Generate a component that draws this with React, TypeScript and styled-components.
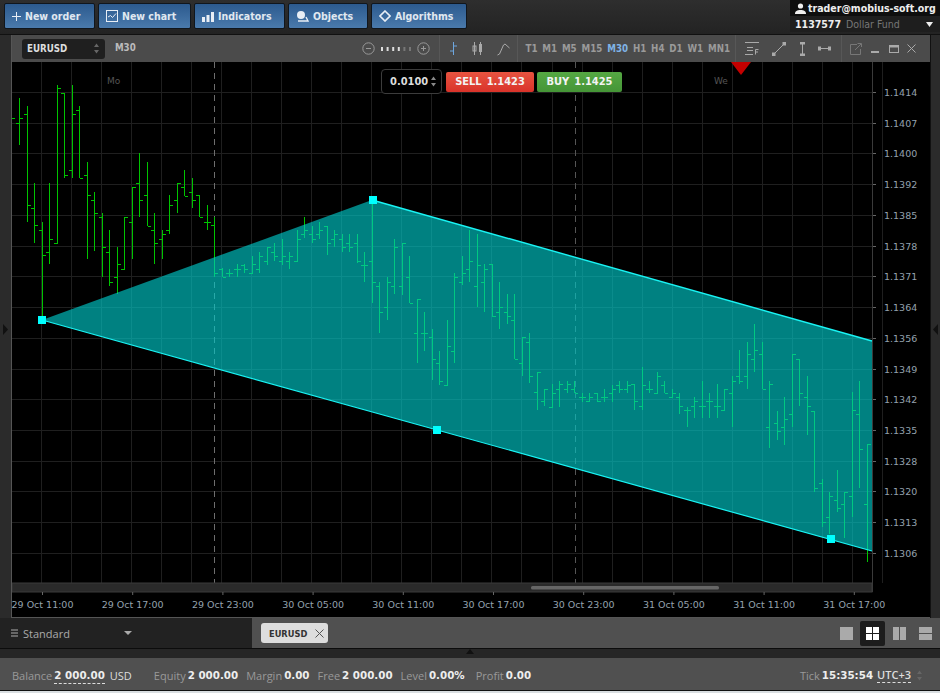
import React from 'react';
import styled, { createGlobalStyle } from 'styled-components';

const Global = createGlobalStyle`
  html, body { margin: 0; padding: 0; background: #1d1d1d; }
  body { width: 940px; height: 693px; overflow: hidden; font-family: "Open Sans", "DejaVu Sans", sans-serif; }
  * { box-sizing: border-box; }
`;

const Page = styled.div`
  width: 940px;
  height: 693px;
  display: flex;
  flex-direction: column;
  background: #222;
`;

const TopBar = styled.div`
  height: 35px;
  flex: none;
  display: flex;
  justify-content: space-between;
  padding-left: 4px;
  background: linear-gradient(#2e2e2e, #232323);
  border-bottom: 1px solid #111;
`;

const Buttons = styled.div`
  display: flex;
  gap: 3px;
  padding-top: 3px;
`;

const TopButton = styled.div<{ $w: number }>`
  width: ${p => p.$w}px;
  height: 26px;
  display: flex;
  align-items: center;
  gap: 4px;
  padding-left: 7px;
  color: #e0e8f0;
  font: 700 condensed 10.5px "DejaVu Sans", sans-serif;
  white-space: nowrap;
  border: 1px solid #10161d;
  border-radius: 2px;
  background: linear-gradient(#2c5a8e, #4a7aac);
`;

const Account = styled.div`
  width: 150px;
  height: 32px;
  background: #0e0e0e;
  color: #eee;
  font: 700 condensed 10.5px "DejaVu Sans", sans-serif;
  white-space: nowrap;
`;

const AccountTop = styled.div`
  height: 16px;
  display: flex;
  align-items: center;
  gap: 2px;
  padding-left: 5px;
`;

const AccountBottom = styled.div`
  height: 16px;
  display: flex;
  align-items: center;
  gap: 5px;
  padding: 0 7px 0 5px;
  background: #1e1e1e;
`;

const FundName = styled.span`
  color: #777;
  font-weight: 400;
  flex: 1;
`;

const Middle = styled.div`
  flex: 1;
  display: flex;
  min-height: 0;
`;

const SideRail = styled.div<{ $w: number; $side: 'left' | 'right' }>`
  width: ${p => p.$w}px;
  flex: none;
  background: #2b2b2b;
  display: flex;
  align-items: center;
  justify-content: center;
  padding-top: 5px;
  ${p => (p.$side === 'left' ? 'border-right: 1px solid #555;' : 'border-left: 1px solid #111;')}
`;

const ChartWindow = styled.div`
  flex: 1;
  display: flex;
  flex-direction: column;
  min-width: 0;
`;

const ChartBar = styled.div`
  height: 27px;
  flex: none;
  display: flex;
  align-items: center;
  background: #4b4b4b;
  color: #bbb;
  font: 700 condensed 9.7px "DejaVu Sans", sans-serif;
  white-space: nowrap;
`;

const SymbolBox = styled.div`
  width: 83px;
  height: 20px;
  margin-left: 10px;
  padding: 0 5px;
  display: flex;
  align-items: center;
  justify-content: space-between;
  border-radius: 3px;
  background: #1f1f1f;
  color: #ddd;
`;

const Interval = styled.span`
  margin: 0 0 2px 10px;
  width: 247px;
`;

const Zoomer = styled.div`
  display: flex;
  align-items: center;
  justify-content: space-between;
  width: 68px;
  margin-right: 9px;
`;

const ToolSection = styled.div<{ $w: number; $pad?: string }>`
  width: ${p => p.$w}px;
  height: 100%;
  display: flex;
  align-items: center;
  justify-content: space-between;
  padding: ${p => p.$pad ?? '0 8px'};
  border-left: 1px solid #575757;
`;

const Period = styled.span<{ $on?: boolean }>`
  color: ${p => (p.$on ? '#7fb3e6' : '#9a9a9a')};
`;

const Chart = styled.div`
  position: relative;
  flex: 1;
  min-height: 0;
  background: #000;
`;

const ChartSvg = styled.svg`
  display: block;
  width: 100%;
  height: 100%;
`;

const OrderPanel = styled.div`
  position: absolute;
  left: 369px;
  top: 7px;
  display: flex;
  align-items: center;
  gap: 3px;
`;

const Lot = styled.div`
  width: 61px;
  height: 25px;
  margin-right: 1px;
  display: flex;
  align-items: center;
  justify-content: space-between;
  padding: 0 4px 0 8px;
  background: #000;
  border: 1px solid #3c3c3c;
  border-radius: 4px;
  color: #ddd;
  font: 700 condensed 11px "DejaVu Sans", sans-serif;
`;

const Trade = styled.div<{ $w: number; $from: string; $to: string }>`
  width: ${p => p.$w}px;
  height: 20px;
  display: flex;
  align-items: center;
  justify-content: center;
  gap: 5px;
  border-radius: 2px;
  color: #f3f3f3;
  font: 700 condensed 11px "DejaVu Sans", sans-serif;
  background: linear-gradient(${p => p.$from}, ${p => p.$to});
`;

const TabsRow = styled.div`
  height: 31px;
  flex: none;
  display: flex;
  border-bottom: 1px solid #0c0c0c;
`;

const LayoutSelect = styled.div`
  width: 252px;
  display: flex;
  align-items: center;
  gap: 5px;
  padding-left: 11px;
  background: #222;
  color: #aaa;
  font-size: 11px;
`;

const SelectLabel = styled.span`
  width: 96px;
`;

const TabStrip = styled.div`
  flex: 1;
  display: flex;
  align-items: center;
  justify-content: space-between;
  padding: 0 2px 0 9px;
  background: #505050;
`;

const Tab = styled.div`
  width: 67px;
  height: 20px;
  display: flex;
  align-items: center;
  gap: 8px;
  padding-left: 8px;
  border-radius: 3px;
  background: #ddd;
  color: #333;
  font: 700 condensed 9.2px "DejaVu Sans", sans-serif;
`;

const Layouts = styled.div`
  display: flex;
  gap: 1.5px;
`;

const LayoutBtn = styled.div<{ $on?: boolean }>`
  width: 25px;
  height: 25px;
  display: flex;
  align-items: center;
  justify-content: center;
  border-radius: 2px;
  background: ${p => (p.$on ? '#1c1c1c' : 'transparent')};
`;

const Splitter = styled.div`
  height: 9px;
  flex: none;
  display: flex;
  justify-content: center;
  background: #262626;
`;

const StatusBar = styled.div`
  height: 33px;
  flex: none;
  display: flex;
  align-items: center;
  padding: 3px 17px 0 12px;
  background: #505050;
  border-bottom: 1px solid #111;
  color: #999;
  font-size: 11px;
`;

const Stat = styled.span<{ $gap?: number }>`
  display: inline-flex;
  gap: 2px;
  margin-right: ${p => p.$gap ?? 8}px;
`;

const Val = styled.b<{ $dash?: boolean }>`
  font: 700 10.3px "DejaVu Sans", sans-serif;
  line-height: 15px;
  color: #eee;
  ${p => p.$dash && 'border-bottom: 1px dashed #ddd;'}
`;

const Unit = styled.span`
  color: #ddd;
  margin-left: 3px;
`;

const Spacer = styled.div`
  flex: 1;
`;

const Utc = styled.span`
  color: #ddd;
  font-weight: 600;
  line-height: 14px;
  border-bottom: 1px dashed #ddd;
  margin: 0 5px 0 4px;
`;

const BottomEdge = styled.div`
  height: 2px;
  flex: none;
  background: #d9dee1;
`;

const priceLabels = ['1.1414', '1.1407', '1.1400', '1.1392', '1.1385', '1.1378', '1.1371', '1.1364', '1.1356', '1.1349', '1.1342', '1.1335', '1.1328', '1.1320', '1.1313', '1.1306'];
const timeLabels = ['29 Oct 11:00', '29 Oct 17:00', '29 Oct 23:00', '30 Oct 05:00', '30 Oct 11:00', '30 Oct 17:00', '30 Oct 23:00', '31 Oct 05:00', '31 Oct 11:00', '31 Oct 17:00'];

// high, low, open, close in page pixels; one bar every 7.5px starting at x = 19.2
const bars: number[][] = [
  [98,145,123,118],[106,222,114,205],[183,243,208,225],[222,320,230,255],[183,264,252,239],
  [85,243,243,88],[93,178,93,175],[85,178,170,114],[106,178,110,178],[162,259,175,195],
  [192,251,200,213],[213,277,217,247],[230,286,252,282],[247,294,277,264],[217,269,269,217],
  [187,259,222,187],[153,217,183,200],[162,226,195,226],[213,264,230,243],[230,259,239,234],
  [195,234,230,205],[183,213,200,183],[170,196,187,196],[178,208,192,200],[195,217,195,217],
  [205,230,222,222],[217,277,225,273],
  [268,277,269,277],[269,277,273,273],[264,277,269,269],[264,273,265,269],[256,273,273,264],
  [252,273,269,256],[247,265,261,247],[243,261,252,256],[239,265,261,256],[252,269,261,256],
  [230,261,261,239],[217,238,234,230],[226,243,234,239],[222,239,234,230],[226,255,226,243],
  [230,247,239,234],[234,252,239,247],[234,252,243,247],[234,263,243,261],[252,282,265,265],
  [202,303,261,282],[282,333,286,312],[277,320,307,282],[239,294,286,247],[243,295,286,243],
  [256,303,277,303],[299,363,333,299],[312,351,333,333],[329,380,337,359],[351,385,363,381],
  [320,385,385,346],[273,363,351,277],[256,285,282,273],[230,282,269,261],[234,307,286,265],
  [264,312,282,269],[264,317,264,316],[282,329,312,307],[294,324,312,316],[294,359,320,359],
  [337,376,363,337],[333,383,342,376],[372,410,392,372],
  [389,406,401,389],[384,407,407,393],[381,407,389,384],[381,393,389,384],[381,393,389,393],
  [393,402,397,397],[393,402,401,397],[393,402,393,401],[389,402,397,397],[385,402,393,389],
  [381,393,385,389],[381,393,389,385],[384,410,384,401],[367,410,406,385],[381,393,389,389],
  [372,393,393,376],[381,393,385,393],[389,397,397,393],[393,414,397,406],[407,427,410,410],
  [397,418,406,401],[381,418,406,406],[393,418,401,401],[384,418,406,406],[389,410,410,389],
  [376,427,393,381],[350,384,376,381],[342,389,376,354],[324,372,359,350],[342,389,354,389],
  [381,448,427,384],[411,440,423,431],[397,445,427,419],[354,427,414,354],[359,406,359,393],
  [376,435,397,406],[411,492,411,488],[479,527,483,522],[492,534,517,496],[470,512,500,508],
  [492,538,504,492],[392,517,496,410],[381,488,414,449],[444,562,504,444],
];

const Bar = ({ x, b }: { x: number; b: number[] }) => {
  const [hi, lo, o, c] = b;
  const px = Math.round(x) + 0.5;
  return (
    <g stroke="#00c400" shapeRendering="crispEdges">
      <line x1={px} x2={px} y1={hi} y2={lo} />
      <line x1={px - 3.5} x2={px} y1={o + 0.5} y2={o + 0.5} />
      <line x1={px} x2={px + 3.5} y1={c + 0.5} y2={c + 0.5} />
    </g>
  );
};

const ChartPicture = () => {
  const xs: number[] = [];
  for (let k = 0; k < 29; k++) xs.push(41.5 + 30.03 * k);
  const ys = priceLabels.map((_, i) => Math.round(92 + i * 30.73) + 0.5);
  return (
    <ChartSvg viewBox="12 62 918 556">
      <g stroke="#1f1f1f" shapeRendering="crispEdges">
        {xs.map(x => <line key={x} x1={x} x2={x} y1={62} y2={583} />)}
        {ys.map(y => <line key={y} y1={y} y2={y} x1={12} x2={872} />)}
      </g>
      <line x1={214.5} x2={214.5} y1={62} y2={583} stroke="#6e6e6e" strokeDasharray="6 5" />
      <line x1={575.5} x2={575.5} y1={62} y2={583} stroke="#555" strokeDasharray="6 5" />
      <g fill="#555" fontFamily="'DejaVu Sans', sans-serif" fontSize="9">
        <text x={107} y={84}>Mo</text>
        <text x={714} y={84}>We</text>
      </g>
      <polygon points="731,62 751,62 741,75" fill="#c40000" />
      <line x1={12} x2={15} y1={118.5} y2={118.5} stroke="#00c400" />
      {bars.map((b, i) => <Bar key={i} x={19.2 + 7.5 * i} b={b} />)}
      <polygon points="42,320 372,200 872,341 872,551" fill="#00cccc" fillOpacity={0.63} />
      <line x1={372} y1={200} x2={872} y2={341} stroke="#19f4f4" strokeWidth={1.4} />
      <line x1={42} y1={320} x2={872} y2={551} stroke="#19f4f4" strokeWidth={1.2} />
      <g fill="#00ffff">
        <rect x={38} y={316} width={8} height={8} />
        <rect x={369} y={196} width={8} height={8} />
        <rect x={433} y={426} width={8} height={8} />
        <rect x={827} y={535} width={8} height={8} />
      </g>
      <rect x={12} y={583} width={860} height={9} fill="#2a2a2a" stroke="#3a3a3a" />
      <rect x={531} y={586} width={188} height={3.5} rx={1.5} fill="#666" />
      <line x1={872.5} x2={872.5} y1={62} y2={592} stroke="#3a3a3a" />
      <g fill="#94a2ae" fontFamily="'DejaVu Sans', sans-serif" fontSize="9.5">
        {priceLabels.map((t, i) => (
          <g key={t}>
            <text x={884} y={ys[i] + 3.5}>{t}</text>
            <line x1={873} x2={876} y1={ys[i]} y2={ys[i]} stroke="#666" />
          </g>
        ))}
        {timeLabels.map((t, i) => (
          <g key={t}>
            <text x={42.5 + i * 90.2} y={607.5} textAnchor="middle">{t}</text>
            <line x1={42.5 + i * 90.2} x2={42.5 + i * 90.2} y1={592} y2={595} stroke="#666" />
          </g>
        ))}
      </g>
      <line x1={12} x2={930} y1={617.5} y2={617.5} stroke="#555" />
    </ChartSvg>
  );
};

const Updown = ({ c = '#888' }: { c?: string }) => (
  <svg width="7" height="13" viewBox="0 0 7 13"><path d="M3.5 1.5 6 5H1zM3.5 11.5 1 8h5z" fill={c} /></svg>
);

const Ic = ({ children, w = 14, h = 14 }: { children: React.ReactNode; w?: number; h?: number }) => (
  <svg width={w} height={h} viewBox={`0 0 ${w} ${h}`} fill="none" style={{ flex: 'none' }}>{children}</svg>
);

const Cell = ({ d }: { d: number[][] }) => (
  <svg width="13" height="13" viewBox="0 0 13 13">
    {d.map((r, i) => <rect key={i} x={r[0]} y={r[1]} width={r[2]} height={r[3]} fill={r[4] ? '#fff' : '#aaa'} />)}
  </svg>
);

export default function App() {
  return (
    <Page>
      <Global />
      <TopBar>
        <Buttons>
          <TopButton $w={91}>
            <Ic w={9} h={11}><path d="M4.5 1v9M0 5.5h9" stroke="#e8eef5" /></Ic>New order
          </TopButton>
          <TopButton $w={93}>
            <Ic w={12} h={12}><rect x=".5" y=".5" width="11" height="11" stroke="#e8eef5" /><path d="M2 7l2.5-1.5 2 2L10 3.5" stroke="#e8eef5" /></Ic>New chart
          </TopButton>
          <TopButton $w={91}>
            <Ic w={12} h={11}><path d="M0 6h3v5H0zM4.5 4h3v7h-3zM9 1h3v10H9z" fill="#e8eef5" /></Ic>Indicators
          </TopButton>
          <TopButton $w={80}>
            <Ic w={13} h={12}><circle cx="5" cy="5" r="4" fill="#e8eef5" /><path d="M2 11h10l-2-4" stroke="#e8eef5" strokeWidth="1.4" /></Ic>Objects
          </TopButton>
          <TopButton $w={96}>
            <Ic w={12} h={12}><path d="M6 1l5 5-5 5-5-5z" stroke="#e8eef5" strokeWidth="1.6" /></Ic>Algorithms
          </TopButton>
        </Buttons>
        <Account>
          <AccountTop>
            <Ic w={11} h={11}><circle cx="5.5" cy="3" r="2.6" fill="#eee" /><path d="M0 11c0-3 2-4 5.5-4S11 8 11 11z" fill="#eee" /></Ic>
            trader@mobius-soft.org
          </AccountTop>
          <AccountBottom>
            1137577 <FundName>Dollar Fund</FundName>
            <svg width="7" height="5" viewBox="0 0 7 5"><path d="M0 0h7L3.5 5z" fill="#eee" /></svg>
          </AccountBottom>
        </Account>
      </TopBar>
      <Middle>
        <SideRail $w={12} $side="left">
          <svg width="5" height="11" viewBox="0 0 5 11"><path d="M0 0v11l5-5.5z" fill="#111" /></svg>
        </SideRail>
        <ChartWindow>
          <ChartBar>
            <SymbolBox>EURUSD <Updown c="#666" /></SymbolBox>
            <Interval>M30</Interval>
            <Zoomer>
              <Ic w={13} h={13}><circle cx="6.5" cy="6.5" r="5.7" stroke="#999" /><path d="M4 6.5h5" stroke="#999" /></Ic>
              <Ic w={30} h={6}><path d="M1 1v4M6.6 1v4M12.2 1v4M17.8 1v4" stroke="#ddd" strokeWidth="2" /><path d="M23.4 1v4M29 1v4" stroke="#777" strokeWidth="2" /></Ic>
              <Ic w={13} h={13}><circle cx="6.5" cy="6.5" r="5.7" stroke="#999" /><path d="M4 6.5h5M6.5 4v5" stroke="#999" /></Ic>
            </Zoomer>
            <ToolSection $w={79} $pad="0 7px 0 10px">
              <Ic w={8} h={15}><path d="M3.5 1v13M3.5 5H7M0 10h3.5" stroke="#6ea6de" /></Ic>
              <Ic w={11} h={15}><path d="M2.5 1v13M8.5 1v13" stroke="#aaa" /><rect x="1" y="5" width="3" height="5" stroke="#aaa" /><rect x="7" y="3" width="3" height="8" fill="#aaa" /></Ic>
              <Ic w={13} h={14}><path d="M.5 13l2-1 4-9 1.5-1L12.5 6" stroke="#aaa" /></Ic>
            </ToolSection>
            <ToolSection $w={218} $pad="0 5px 0 7px">
              {['T1', 'M1', 'M5', 'M15', 'M30', 'H1', 'H4', 'D1', 'W1', 'MN1'].map(p => (
                <Period key={p} $on={p === 'M30'}>{p}</Period>
              ))}
            </ToolSection>
            <ToolSection $w={106} $pad="0 10px 0 9px">
              <Ic w={14} h={13}><path d="M0 .5h14M2 5.5h6M2 8.5h6M0 12.5h8" stroke="#aaa" /><path d="M10.5 12.5v-5h3M10.5 10h2.5" stroke="#aaa" /></Ic>
              <Ic w={14} h={14}><path d="M2.5 11.5l9-9" stroke="#aaa" /><rect x="0" y="10.5" width="3.5" height="3.5" fill="#aaa" /><rect x="10.5" y="0" width="3.5" height="3.5" fill="#aaa" /></Ic>
              <Ic w={5} h={14}><path d="M2.5 2v10" stroke="#aaa" /><path d="M0 0h5v2.5H0zM0 11.5h5V14H0z" fill="#aaa" /></Ic>
              <Ic w={13} h={5}><path d="M2 2.5h9" stroke="#aaa" /><path d="M0 .5h3v4H0zM10 .5h3v4h-3z" fill="#aaa" /></Ic>
            </ToolSection>
            <ToolSection $w={89} $pad="0 14px 0 8px">
              <Ic w={12} h={12}><path d="M7 1.5H.5v10h10V6M5 7l6-6M7.5 .5H11.5V4" stroke="#777" /></Ic>
              <Ic w={10} h={10}><path d="M1 8h8" stroke="#aaa" strokeWidth="2" /></Ic>
              <Ic w={10} h={10}><rect x=".5" y="1.5" width="9" height="7" stroke="#aaa" /><path d="M1 2.5h8" stroke="#aaa" strokeWidth="2" /></Ic>
              <Ic w={9} h={9}><path d="M.5 .5l8 8M8.5 .5l-8 8" stroke="#aaa" /></Ic>
            </ToolSection>
          </ChartBar>
          <Chart>
            <ChartPicture />
            <OrderPanel>
              <Lot>0.0100 <Updown /></Lot>
              <Trade $w={88} $from="#e85440" $to="#d9332a">SELL <span>1.1423</span></Trade>
              <Trade $w={85} $from="#55a843" $to="#459537">BUY <span>1.1425</span></Trade>
            </OrderPanel>
          </Chart>
        </ChartWindow>
        <SideRail $w={10} $side="right">
          <svg width="5" height="11" viewBox="0 0 5 11"><path d="M5 0v11L0 5.5z" fill="#111" /></svg>
        </SideRail>
      </Middle>
      <TabsRow>
        <LayoutSelect>
          <svg width="7" height="8" viewBox="0 0 7 8"><path d="M0 1h7M0 4h7M0 7h7" stroke="#aaa" /></svg>
          <SelectLabel>Standard</SelectLabel>
          <svg width="8" height="4" viewBox="0 0 8 4"><path d="M0 0h8L4 4z" fill="#aaa" /></svg>
        </LayoutSelect>
        <TabStrip>
          <Tab>EURUSD
            <Ic w={9} h={9}><path d="M.5 .5l8 8M8.5 .5l-8 8" stroke="#555" /></Ic>
          </Tab>
          <Layouts>
            <LayoutBtn><Cell d={[[0, 0, 13, 13, 0]]} /></LayoutBtn>
            <LayoutBtn $on><Cell d={[[0, 0, 6, 6, 1], [7, 0, 6, 6, 1], [0, 7, 6, 6, 1], [7, 7, 6, 6, 1]]} /></LayoutBtn>
            <LayoutBtn><Cell d={[[0, 0, 6, 13, 0], [7, 0, 6, 13, 0]]} /></LayoutBtn>
            <LayoutBtn><Cell d={[[0, 0, 13, 6, 0], [0, 7, 13, 6, 0]]} /></LayoutBtn>
          </Layouts>
        </TabStrip>
      </TabsRow>
      <Splitter>
        <svg width="8" height="5" viewBox="0 0 8 5"><path d="M4 0l4 5H0z" fill="#111" /></svg>
      </Splitter>
      <StatusBar>
        <Stat $gap={22}>Balance <Val $dash>2 000.00</Val><Unit>USD</Unit></Stat>
        <Stat>Equity <Val>2 000.00</Val></Stat>
        <Stat>Margin <Val>0.00</Val></Stat>
        <Stat>Free <Val>2 000.00</Val></Stat>
        <Stat $gap={11}>Level <Val>0.00%</Val></Stat>
        <Stat>Profit <Val>0.00</Val></Stat>
        <Spacer />
        <Stat $gap={0}>Tick <Val>15:35:54</Val></Stat>
        <Utc>UTC+3</Utc>
        <Updown c="#666" />
      </StatusBar>
      <BottomEdge />
    </Page>
  );
}
